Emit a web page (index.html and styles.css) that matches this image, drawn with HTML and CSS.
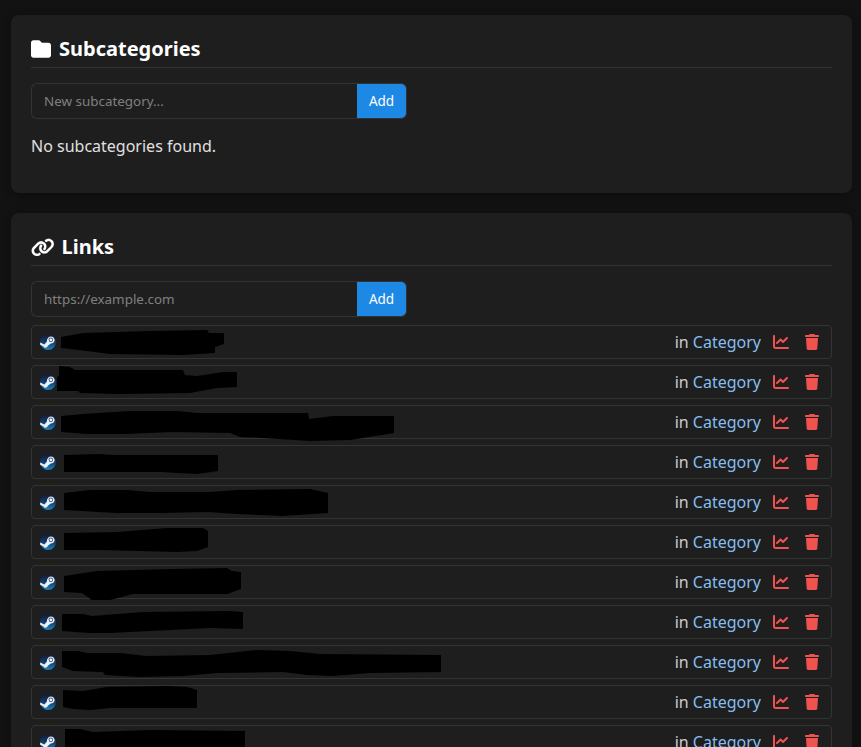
FILE: index.html
```html
<!DOCTYPE html>
<html lang="en">
<head>
<meta charset="utf-8">
<title>Category</title>
<link rel="stylesheet" href="styles.css">
</head>
<body>
<svg class="defs" width="0" height="0" aria-hidden="true">
  <defs>
    <linearGradient id="steam-bg" x1="0" y1="0" x2="0" y2="1">
      <stop offset="0" stop-color="#111a30"/>
      <stop offset="0.5" stop-color="#123a6b"/>
      <stop offset="1" stop-color="#1a86c4"/>
    </linearGradient>
    <symbol id="steam" viewBox="0 0 16 16">
      <circle cx="8" cy="8" r="8" fill="url(#steam-bg)"/>
      <path d="M0 8.600 4.400 10.400l2.500-2.800C6.900 4.600 8.700 2.400 10.800 2.400c2.100 0 3.800 1.600 3.800 3.500 0 2.100-1.800 3.700-3.900 3.600L7.700 12C7.300 13.300 6 14 4.800 13.700 3.900 13.500 3.300 12.900 3 12.100L.3 11z" fill="#eef2f7"/>
      <circle cx="10.800" cy="5.800" r="2.200" fill="#1a4070"/>
      <circle cx="10.800" cy="5.800" r="1.500" fill="#eef2f7"/>
    </symbol>
    <symbol id="chart" viewBox="0 0 512 512">
      <path d="M64 64c0-17.700-14.300-32-32-32S0 46.300 0 64V400c0 44.200 35.800 80 80 80H480c17.700 0 32-14.300 32-32s-14.300-32-32-32H80c-8.800 0-16-7.200-16-16V64zm406.600 86.600c12.500-12.500 12.500-32.800 0-45.300s-32.800-12.500-45.300 0L320 210.700l-57.400-57.400c-12.500-12.500-32.800-12.500-45.300 0l-112 112c-12.500 12.500-12.500 32.800 0 45.300s32.800 12.500 45.300 0L240 221.300l57.400 57.400c12.500 12.500 32.800 12.500 45.300 0l128-128z"/>
    </symbol>
    <symbol id="trash" viewBox="0 0 448 512">
      <path d="M135.200 17.700L128 32H32C14.300 32 0 46.300 0 64S14.300 96 32 96H416c17.700 0 32-14.300 32-32s-14.300-32-32-32H320l-7.200-14.300C307.400 6.800 296.300 0 284.200 0H163.800c-12.100 0-23.200 6.800-28.600 17.700zM416 128H32L53.200 467c1.600 25.300 22.600 45 47.900 45H346.900c25.300 0 46.300-19.700 47.900-45L416 128z"/>
    </symbol>
  </defs>
</svg>

<section class="card">
  <h2 class="card-title">
    <svg class="title-icon folder" viewBox="0 0 512 512"><path d="M64 480H448c35.300 0 64-28.700 64-64V160c0-35.300-28.700-64-64-64H288c-10.100 0-19.600-4.700-25.600-12.800L243.200 57.600C231.100 41.500 212.100 32 192 32H64C28.700 32 0 60.700 0 96V416c0 35.300 28.700 64 64 64z"/></svg>
    <span>Subcategories</span>
  </h2>
  <form class="add-form">
    <input class="add-input" type="text" placeholder="New subcategory...">
    <button class="add-button" type="button">Add</button>
  </form>
  <p class="empty">No subcategories found.</p>
</section>

<section class="card">
  <h2 class="card-title">
    <svg class="title-icon link" viewBox="0 0 640 512"><path d="M579.800 267.700c56.500-56.500 56.500-148 0-204.500c-50-50-128.800-56.500-186.300-15.400l-1.600 1.100c-14.400 10.300-17.700 30.300-7.400 44.600s30.300 17.700 44.600 7.400l1.600-1.100c32.100-22.900 76-19.300 103.800 8.600c31.500 31.500 31.500 82.500 0 114L422.300 334.800c-31.500 31.500-82.500 31.500-114 0c-27.900-27.900-31.500-71.800-8.600-103.800l1.100-1.600c10.300-14.400 6.900-34.400-7.400-44.600s-34.400-6.900-44.600 7.400l-1.100 1.600C206.500 251.200 213 330 263 380c56.500 56.500 148 56.500 204.500 0L579.800 267.700zM60.200 244.300c-56.500 56.500-56.500 148 0 204.500c50 50 128.800 56.500 186.300 15.400l1.600-1.100c14.400-10.300 17.700-30.300 7.400-44.600s-30.300-17.700-44.600-7.400l-1.600 1.100c-32.100 22.900-76 19.300-103.800-8.600C74 372 74 321 105.500 289.500L217.700 177.200c31.500-31.500 82.500-31.500 114 0c27.900 27.900 31.500 71.800 8.600 103.900l-1.100 1.600c-10.300 14.400-6.900 34.400 7.400 44.600s34.400 6.900 44.600-7.400l1.100-1.600C433.500 260.800 427 182 377 132c-56.500-56.500-148-56.500-204.500 0L60.200 244.300z"/></svg>
    <span>Links</span>
  </h2>
  <form class="add-form">
    <input class="add-input" type="text" placeholder="https://example.com">
    <button class="add-button" type="button">Add</button>
  </form>
  <ul class="link-list">
    <li class="link-row"><svg class="favicon"><use href="#steam"/></svg><span class="in">in <a href="#">Category</a></span><svg class="act chart"><use href="#chart"/></svg><svg class="act trash"><use href="#trash"/></svg></li>
    <li class="link-row"><svg class="favicon"><use href="#steam"/></svg><span class="in">in <a href="#">Category</a></span><svg class="act chart"><use href="#chart"/></svg><svg class="act trash"><use href="#trash"/></svg></li>
    <li class="link-row"><svg class="favicon"><use href="#steam"/></svg><span class="in">in <a href="#">Category</a></span><svg class="act chart"><use href="#chart"/></svg><svg class="act trash"><use href="#trash"/></svg></li>
    <li class="link-row"><svg class="favicon"><use href="#steam"/></svg><span class="in">in <a href="#">Category</a></span><svg class="act chart"><use href="#chart"/></svg><svg class="act trash"><use href="#trash"/></svg></li>
    <li class="link-row"><svg class="favicon"><use href="#steam"/></svg><span class="in">in <a href="#">Category</a></span><svg class="act chart"><use href="#chart"/></svg><svg class="act trash"><use href="#trash"/></svg></li>
    <li class="link-row"><svg class="favicon"><use href="#steam"/></svg><span class="in">in <a href="#">Category</a></span><svg class="act chart"><use href="#chart"/></svg><svg class="act trash"><use href="#trash"/></svg></li>
    <li class="link-row"><svg class="favicon"><use href="#steam"/></svg><span class="in">in <a href="#">Category</a></span><svg class="act chart"><use href="#chart"/></svg><svg class="act trash"><use href="#trash"/></svg></li>
    <li class="link-row"><svg class="favicon"><use href="#steam"/></svg><span class="in">in <a href="#">Category</a></span><svg class="act chart"><use href="#chart"/></svg><svg class="act trash"><use href="#trash"/></svg></li>
    <li class="link-row"><svg class="favicon"><use href="#steam"/></svg><span class="in">in <a href="#">Category</a></span><svg class="act chart"><use href="#chart"/></svg><svg class="act trash"><use href="#trash"/></svg></li>
    <li class="link-row"><svg class="favicon"><use href="#steam"/></svg><span class="in">in <a href="#">Category</a></span><svg class="act chart"><use href="#chart"/></svg><svg class="act trash"><use href="#trash"/></svg></li>
    <li class="link-row"><svg class="favicon"><use href="#steam"/></svg><span class="in">in <a href="#">Category</a></span><svg class="act chart"><use href="#chart"/></svg><svg class="act trash"><use href="#trash"/></svg></li>
  </ul>
</section>

<svg class="redactions" viewBox="0 0 861 747" aria-hidden="true">
  <polygon points="61,337 83,333 150,331 207,330 209,333 224,333 224,344 215,347 215,353 183,355 110,354 87,351 61,348"/>
  <polygon points="59,366 70,367 75,370 183,370 185,375 197,376 223,372 237,372 237,387 217,388 190,393 117,394 80,393 78,391 57,391 57,378 59,375"/>
  <polygon points="61,416 83,414 130,411 177,411 197,413 308,413 309,419 333,416 394,416 394,433 350,440 310,441 263,438 240,437 230,433 173,432 123,434 87,434 61,432"/>
  <polygon points="64,455 100,454 113,455 218,455 218,471 197,474 177,473 163,472 64,472"/>
  <polygon points="64,493 90,490 127,490 150,492 210,492 237,490 310,489 328,493 328,513 283,516 237,514 207,512 160,513 117,513 64,510"/>
  <polygon points="64,533 117,532 167,528 203,528 208,531 208,547 197,551 177,552 100,550 64,550"/>
  <polygon points="64,576 97,571 173,569 227,568 232,571 241,572 241,589 227,594 133,594 110,600 92,600 82,593 64,592"/>
  <polygon points="62,614 83,614 92,616 143,612 230,611 243,612 243,629 210,628 110,633 90,633 62,631"/>
  <polygon points="62,651 78,651 87,653 120,653 147,656 210,655 257,650 290,651 320,654 441,655 441,672 370,673 333,676 307,675 283,672 217,673 183,676 140,677 105,675 103,672 73,671 62,667"/>
  <polygon points="63,690 83,691 107,687 167,686 187,687 197,690 197,708 110,708 90,710 73,709 63,707"/>
  <polygon points="65,729 80,729 93,732 150,730 245,731 245,747 65,747"/>
</svg>
</body>
</html>
```

FILE: styles.css
```css
* {
  box-sizing: border-box;
}

html {
  height: 100%;
  overflow: hidden;
}

body {
  position: relative;
  margin: 0;
  height: 100%;
  padding: 15px 9px 0 11px;
  overflow: hidden;
  background: #121212;
  color: #e0e0e0;
  font-family: "Noto Sans", sans-serif;
  font-size: 16px;
  line-height: 24px;
}

.defs {
  position: absolute;
}

.card {
  margin-bottom: 20px;
  padding: 20px;
  background: #1e1e1e;
  border-radius: 8px;
  box-shadow: 0 2px 8px rgba(0, 0, 0, 0.3);
}

.card-title {
  display: flex;
  align-items: center;
  gap: 8px;
  margin: 0 0 15px;
  padding-bottom: 4px;
  height: 33px;
  border-bottom: 1px solid #333;
  color: #fff;
  font-size: 20px;
  font-weight: 700;
  line-height: 28px;
}

.title-icon {
  flex: none;
  height: 20px;
  fill: #fff;
}

.folder {
  width: 20px;
}

.link {
  width: 23.500px;
  height: 18.800px;
  margin-right: -1px;
  stroke: #fff;
  stroke-width: 5px;
}

.add-form {
  display: flex;
  width: 376px;
  height: 36px;
}

.add-input {
  flex: 1;
  min-width: 0;
  padding: 0 12px;
  background: #1e1e1e;
  border: 1px solid #333;
  border-right: 0;
  border-radius: 6px 0 0 6px;
  color: #e0e0e0;
  font: 13.420px/20px "Noto Sans", sans-serif;
  outline: 0;
}

.add-input::placeholder {
  color: #808080;
  opacity: 1;
}

.add-button {
  width: 50px;
  padding: 0;
  background: #1e88e5;
  border: 1px solid #333;
  border-left: 0;
  border-radius: 0 6px 6px 0;
  color: #fff;
  font: 13.500px/20px "Noto Sans", sans-serif;
}

.empty {
  margin: 15px 0;
}

.link-list {
  display: flex;
  flex-direction: column;
  gap: 6px;
  margin: 8px 0 0;
  padding: 0;
  list-style: none;
}

.link-row {
  display: flex;
  align-items: center;
  height: 34px;
  padding: 0 12px 0 8px;
  border: 1px solid #333;
  border-radius: 4px;
}

.favicon {
  flex: none;
  width: 16px;
  height: 16px;
  margin-right: auto;
}

.in {
  color: #ccc;
}

.in a {
  color: #85bdf0;
  text-decoration: none;
}

.act {
  flex: none;
  height: 16px;
  fill: #ef5350;
}

.chart {
  width: 16px;
  margin-left: 12px;
}

.trash {
  width: 14px;
  margin-left: 16px;
}

.redactions {
  position: absolute;
  left: 0;
  top: 0;
  width: 861px;
  height: 747px;
  fill: #000;
}
```
